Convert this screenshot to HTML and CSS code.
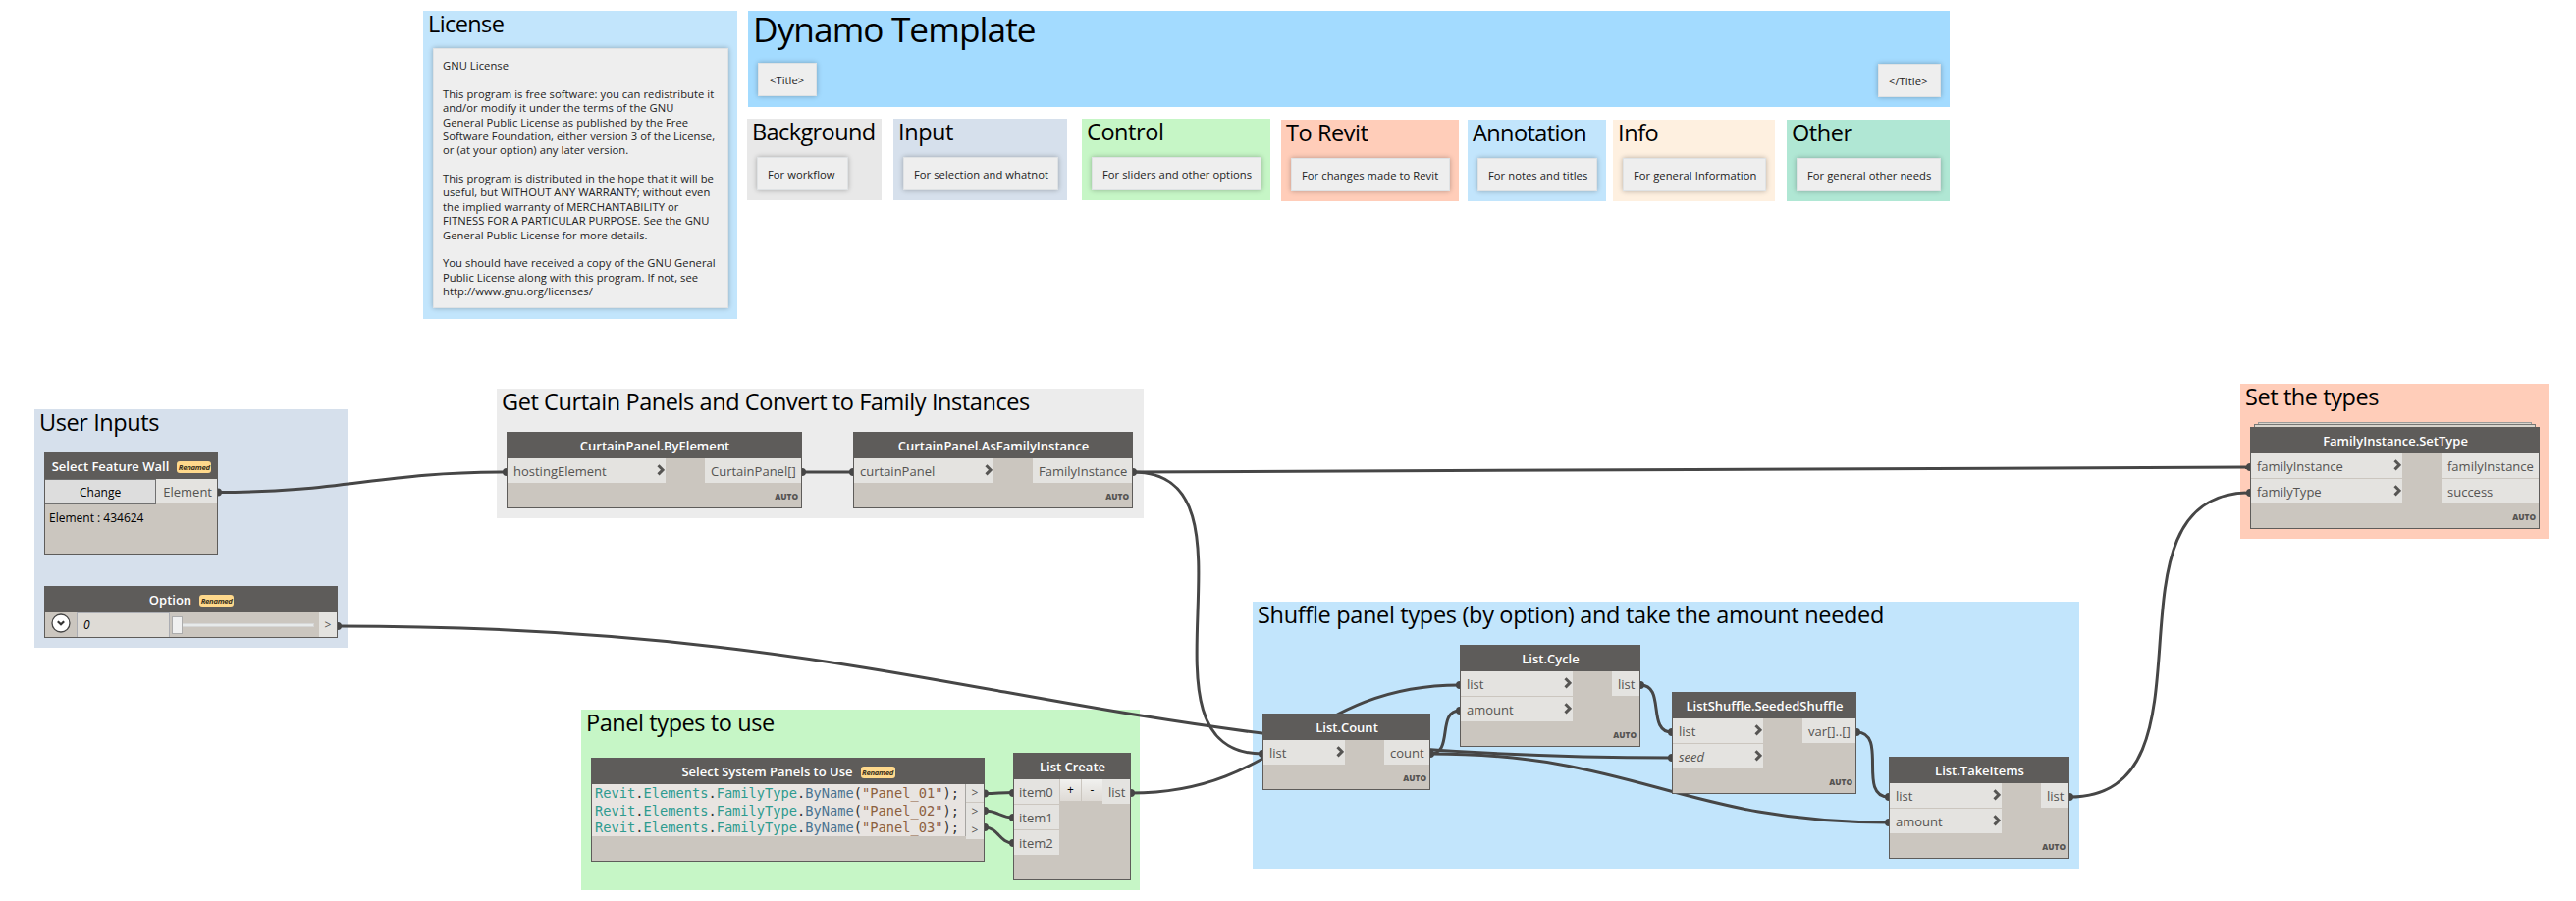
FILE: index.html
```html
<!DOCTYPE html>
<html lang="en">
<head>
<meta charset="utf-8">
<title>Dynamo Template</title>
<link rel="stylesheet" href="styles.css">
</head>
<body>
<main class="canvas">
  <section class="group g-license sky"><h2>License</h2>
    <div class="note note-long">GNU License

This program is free software: you can redistribute it
and/or modify it under the terms of the GNU
General Public License as published by the Free
Software Foundation, either version 3 of the License,
or (at your option) any later version.

This program is distributed in the hope that it will be
useful, but WITHOUT ANY WARRANTY; without even
the implied warranty of MERCHANTABILITY or
FITNESS FOR A PARTICULAR PURPOSE. See the GNU
General Public License for more details.

You should have received a copy of the GNU General
Public License along with this program. If not, see
http://www.gnu.org/licenses/</div></section>
  <section class="group g-banner"><h1>Dynamo Template</h1>
    <div class="banner-row"><div class="note note-start">&lt;Title&gt;</div><div class="note note-end">&lt;/Title&gt;</div></div></section>
  <section class="group g-background"><h2>Background</h2><div class="note">For workflow</div></section>
  <section class="group g-input slate"><h2>Input</h2><div class="note">For selection and whatnot</div></section>
  <section class="group g-control green"><h2>Control</h2><div class="note">For sliders and other options</div></section>
  <section class="group g-revit peach"><h2>To Revit</h2><div class="note">For changes made to Revit</div></section>
  <section class="group g-annotation sky"><h2>Annotation</h2><div class="note">For notes and titles</div></section>
  <section class="group g-info"><h2>Info</h2><div class="note">For general Information</div></section>
  <section class="group g-other"><h2>Other</h2><div class="note">For general other needs</div></section>

  <section class="group g-user slate"><h2>User Inputs</h2></section>
  <section class="group g-panels"><h2>Get Curtain Panels and Convert to Family Instances</h2></section>
  <section class="group g-types green"><h2>Panel types to use</h2></section>
  <section class="group g-shuffle sky"><h2>Shuffle panel types (by option) and take the amount needed</h2></section>
  <section class="group g-set peach"><h2>Set the types</h2></section>

  <svg class="wires" width="2624" height="918" viewBox="0 0 2624 918">
    <g fill="none" stroke="#464646" stroke-width="3">
      <path d="M222 501.500C354 501.500 384 481 516 481"/>
      <path d="M817 481H869"/>
      <path d="M1154 481C1666 481 1780 476 2292 476"/>
      <path d="M1154 481C1296 481 1144 768 1286 768"/>
      <path d="M344 638C958 638 1089 772 1703 772"/>
      <path d="M1152 808C1309 808 1330 698 1487 698"/>
      <path d="M1457 768C1481 768 1463 724 1487 724"/>
      <path d="M1457 768C1669 768 1712 838 1924 838"/>
      <path d="M1671 698C1697 698 1677 746 1703 746"/>
      <path d="M1891 746C1924 746 1891 812 1924 812"/>
      <path d="M2108 812C2270 812 2130 502 2292 502"/>
      <path d="M1003 808.500C1016 808.500 1019 807.500 1032 807.500"/>
      <path d="M1003 826C1017 826 1018 833 1032 833"/>
      <path d="M1003 843C1017 843 1018 859 1032 859"/>
    </g>
    <g fill="#464646">
      <circle cx="222" cy="501.500" r="4"/><circle cx="516" cy="481" r="4"/><circle cx="817" cy="481" r="4"/><circle cx="869" cy="481" r="4"/>
      <circle cx="1154" cy="481" r="4"/><circle cx="2292" cy="476" r="4"/><circle cx="2292" cy="502" r="4"/><circle cx="1286" cy="768" r="4"/>
      <circle cx="344" cy="638" r="4"/><circle cx="1703" cy="772" r="4"/><circle cx="1152" cy="808" r="4"/><circle cx="1487" cy="698" r="4"/>
      <circle cx="1457" cy="768" r="4"/><circle cx="1487" cy="724" r="4"/><circle cx="1924" cy="838" r="4"/><circle cx="1671" cy="698" r="4"/>
      <circle cx="1703" cy="746" r="4"/><circle cx="1891" cy="746" r="4"/><circle cx="1924" cy="812" r="4"/><circle cx="2108" cy="812" r="4"/>
      <circle cx="1003" cy="808.500" r="4"/><circle cx="1003" cy="826" r="4"/><circle cx="1003" cy="843" r="4"/>
      <circle cx="1032" cy="808" r="4"/><circle cx="1032" cy="833" r="4"/><circle cx="1032" cy="859" r="4"/>
    </g>
    <symbol id="chev" viewBox="0 0 8 12"><path d="M1.500 1.200 6 5.800 1.500 10.400" fill="none" stroke="#565553" stroke-width="3"/></symbol>
  </svg>

  <article class="node n-wall"><header>Select Feature Wall<span class="tag">Renamed</span></header>
    <div class="wall-row"><div class="change">Change</div><div class="port">Element</div></div>
    <p class="selection">Element : 434624</p></article>

  <article class="node n-option"><header>Option<span class="tag">Renamed</span></header>
    <div class="option-row">
      <svg class="expander" width="20" height="20" viewBox="0 0 20 20"><circle cx="10" cy="10" r="9" fill="#fff" stroke="#444" stroke-width="1.300"/><path d="M6.800 8.200 10 11.300 13.200 8.200" fill="none" stroke="#333" stroke-width="2.200"/></svg>
      <div class="value">0</div>
      <div class="slider"><div class="thumb"></div><div class="track"></div></div>
      <div class="port port-mini">&gt;</div>
    </div></article>

  <article class="node n-byelement"><header>CurtainPanel.ByElement</header>
    <div class="ports"><div class="ins"><div class="port">hostingElement<svg><use href="#chev"/></svg></div></div>
    <div class="outs"><div class="port">CurtainPanel[]</div></div></div><footer>AUTO</footer></article>

  <article class="node n-asfamily"><header>CurtainPanel.AsFamilyInstance</header>
    <div class="ports"><div class="ins"><div class="port">curtainPanel<svg><use href="#chev"/></svg></div></div>
    <div class="outs"><div class="port">FamilyInstance</div></div></div><footer>AUTO</footer></article>

  <article class="node n-code"><header>Select System Panels to Use<span class="tag">Renamed</span></header>
    <div class="code-row">
      <pre class="code"><i>Revit</i>.<i>Elements</i>.<i>FamilyType</i>.<b>ByName</b>(<s>"Panel_01"</s>);
<i>Revit</i>.<i>Elements</i>.<i>FamilyType</i>.<b>ByName</b>(<s>"Panel_02"</s>);
<i>Revit</i>.<i>Elements</i>.<i>FamilyType</i>.<b>ByName</b>(<s>"Panel_03"</s>);</pre>
      <div class="code-ports"><div>&gt;</div><div>&gt;</div><div>&gt;</div></div>
    </div></article>

  <article class="node n-create"><header>List Create</header>
    <div class="ports"><div class="ins"><div class="port">item0</div><div class="port">item1</div><div class="port">item2</div></div>
    <div class="buttons"><span>+</span><span>-</span></div>
    <div class="outs"><div class="port">list</div></div></div></article>

  <article class="node n-count"><header>List.Count</header>
    <div class="ports"><div class="ins"><div class="port">list<svg><use href="#chev"/></svg></div></div>
    <div class="outs"><div class="port">count</div></div></div><footer>AUTO</footer></article>

  <article class="node n-cycle"><header>List.Cycle</header>
    <div class="ports"><div class="ins"><div class="port">list<svg><use href="#chev"/></svg></div><div class="port">amount<svg><use href="#chev"/></svg></div></div>
    <div class="outs"><div class="port">list</div></div></div><footer>AUTO</footer></article>

  <article class="node n-seeded"><header>ListShuffle.SeededShuffle</header>
    <div class="ports"><div class="ins"><div class="port">list<svg><use href="#chev"/></svg></div><div class="port optional">seed<svg><use href="#chev"/></svg></div></div>
    <div class="outs"><div class="port">var[]..[]</div></div></div><footer>AUTO</footer></article>

  <article class="node n-take"><header>List.TakeItems</header>
    <div class="ports"><div class="ins"><div class="port">list<svg><use href="#chev"/></svg></div><div class="port">amount<svg><use href="#chev"/></svg></div></div>
    <div class="outs"><div class="port">list</div></div></div><footer>AUTO</footer></article>

  <div class="stack stack-back"></div><div class="stack stack-front"></div>
  <article class="node n-settype"><header>FamilyInstance.SetType</header>
    <div class="ports"><div class="ins"><div class="port">familyInstance<svg><use href="#chev"/></svg></div><div class="port">familyType<svg><use href="#chev"/></svg></div></div>
    <div class="outs"><div class="port">familyInstance</div><div class="port">success</div></div></div><footer>AUTO</footer></article>
</main>
</body>
</html>
```
FILE: styles.css
```css
* { box-sizing: border-box; }
body { margin: 0; background: #fff; font-family: "Open Sans", sans-serif; }
.canvas { position: relative; width: 2624px; height: 918px; overflow: hidden; }

/* groups */
.group { position: absolute; padding: 0 9px 10px 10px; }
.group h1, .group h2 { margin: 0; font-weight: 400; color: #000; white-space: nowrap; }
.group h2 { height: 28px; font-size: 23.5px; line-height: 26px; letter-spacing: -0.42px; margin-left: -5px; }
.group h1 { height: 38px; font-size: 35.2px; line-height: 36px; letter-spacing: -0.9px; margin-left: -5px; }
.sky { background: #c2e5fc; }
.slate { background: #d6e0ec; }
.green { background: #c6f6c6; }
.peach { background: #ffcdb9; }
.g-license { left: 431px; top: 11px; width: 320px; height: 314px; }
.g-banner { left: 762px; top: 11px; width: 1224px; height: 98px; background: #a3dbff; }
.g-background { left: 761px; top: 121px; width: 137px; height: 83px; background: #e8e8e8; }
.g-input { left: 910px; top: 121px; width: 177px; height: 83px; }
.g-control { left: 1102px; top: 121px; width: 192px; height: 83px; }
.g-revit { left: 1305px; top: 122px; width: 181px; height: 83px; }
.g-annotation { left: 1495px; top: 122px; width: 141px; height: 83px; }
.g-info { left: 1643px; top: 122px; width: 165px; height: 83px; background: #fef0e0; }
.g-other { left: 1820px; top: 122px; width: 166px; height: 83px; background: #b0e7d4; }
.g-user { left: 35px; top: 417px; width: 319px; height: 243px; }
.g-panels { left: 506px; top: 396px; width: 659px; height: 132px; background: #ececec; }
.g-types { left: 592px; top: 723px; width: 569px; height: 184px; }
.g-shuffle { left: 1276px; top: 613px; width: 842px; height: 272px; }
.g-shuffle h2 { letter-spacing: -0.32px; }
.g-background h2, .g-annotation h2, .g-license h2 { letter-spacing: -0.6px; }
.g-set { left: 2282px; top: 391px; width: 315px; height: 158px; }

/* notes */
.note {
  height: 34px; margin-top: 11px; padding: 0 9px 0 10px; border: 1px solid #dfe2e4;
  background: #eee; color: #222; font-size: 11.2px; line-height: 33px; letter-spacing: 0.06px; white-space: nowrap;
  box-shadow: 0 0 5px rgba(0, 0, 0, .28);
}
.note-long { width: 301px; height: 265px; margin: 10px 0 0; padding: 10px 9px 8px; line-height: 14.375px; white-space: pre; }
.g-background .note { width: 93px; }
.banner-row { display: flex; justify-content: space-between; margin-top: 15px; }
.banner-row .note { margin: 0; }
.banner-row .note-start { width: 60px; padding-left: 11px; }
.banner-row .note-end { position: relative; top: 1px; width: 64px; }

.wires { position: absolute; left: 0; top: 0; }

/* nodes */
.node { position: absolute; border: 1px solid #5e5c5a; background: #cbc6bf; color: #555452; font-size: 13px; }
.node header {
  display: flex; align-items: center; justify-content: center; height: 26px; padding: 0 0 0 1px;
  background: #5e5c5a; color: #fff; font-weight: 600; white-space: nowrap;
}
.node footer { position: absolute; right: 3px; bottom: 5px; font-size: 8.3px; font-weight: 800; line-height: 12px; }
.tag {
  width: 35px; height: 12px; margin: 2px 0 0 8px; border-radius: 3px; background: #ffd98c; color: #3b3220;
  font-size: 7.7px; font-style: italic; font-weight: 700; line-height: 12px; letter-spacing: -0.3px; text-align: center;
}
.ports { display: flex; justify-content: space-between; }
.ins, .outs { display: flex; flex-direction: column; gap: 1px; }
.port { display: flex; align-items: center; justify-content: space-between; height: 25px; padding: 1px 5px 0 6px; background: #e4e3e0; white-space: nowrap; }
.ins .port { padding-right: 0; }
.port svg { width: 8px; height: 12px; margin: -3px 1px 0 0; }
.optional { font-style: italic; }

.n-byelement { left: 516px; top: 440px; width: 301px; height: 78px; }
.n-byelement .ins { width: 161px; } .n-byelement .outs { width: 98px; }
.n-asfamily { left: 869px; top: 440px; width: 285px; height: 78px; }
.n-asfamily .ins { width: 142px; } .n-asfamily .outs { width: 101px; }
.n-count { left: 1286px; top: 727px; width: 171px; height: 78px; }
.n-count .ins { width: 83px; } .n-count .outs { width: 46px; }
.n-cycle { left: 1487px; top: 657px; width: 184px; height: 104px; }
.n-cycle .ins { width: 114px; } .n-cycle .outs { width: 28px; }
.n-seeded { left: 1703px; top: 705px; width: 188px; height: 104px; }
.n-seeded .ins { width: 92px; } .n-seeded .outs { width: 54px; }
.n-take { left: 1924px; top: 771px; width: 184px; height: 104px; }
.n-take .ins { width: 114px; } .n-take .outs { width: 28px; }
.n-settype { left: 2292px; top: 435px; width: 295px; height: 104px; }
.n-settype .ins { width: 154px; } .n-settype .outs { width: 99px; }
.stack { position: absolute; background: #d9d5cd; border: 1px solid #9a9a98; }
.stack-back { left: 2300px; top: 430px; width: 279px; height: 6px; }
.stack-front { left: 2296px; top: 432px; width: 287px; height: 6px; border-color: #777673; }

.n-wall { left: 45px; top: 461px; width: 177px; height: 104px; }
.wall-row { display: flex; }
.change {
  width: 114px; height: 26px; border: solid #707070; border-width: 1px 1px 1px 0; background: #ddd; color: #000;
  font-size: 12px; line-height: 26px; text-align: center;
}
.wall-row .port { flex: 1; padding-left: 7px; }
.selection { margin: 5px 0 0 4px; color: #000; font-size: 12px; line-height: 17px; }

.n-option { left: 45px; top: 597px; width: 299px; height: 53px; }
.option-row { display: flex; height: 25px; }
.expander { margin: 1px 6px 0; }
.value {
  width: 95px; padding-left: 6px; border: 1px solid #abadb3; border-bottom: 0; background: #dedbd6; color: #000;
  font-size: 12px; font-style: italic; line-height: 24px;
}
.slider { display: flex; width: 152px; padding-left: 2px; }
.thumb { width: 11px; height: 18px; margin-top: 4px; border: 1px solid #acacac; background: #f0f0f0; }
.track { width: 134px; height: 4px; margin-top: 11px; background: #e7eaea; border: 1px solid #d6d6d6; border-left: 0; }
.port-mini { flex: 1; padding: 0; justify-content: center; font-size: 12px; }

.n-code { left: 602px; top: 772px; width: 401px; height: 106px; }
.code-row { display: flex; height: 53px; }
.code {
  width: 381px; margin: 0; padding: 1px 0 0 3px; border-right: 1px solid #a7a5a2; background: #e8e4e1; color: #333;
  font: 13.7px/17.7px "DejaVu Sans Mono", monospace;
}
.code i { color: #2e9b8f; font-style: normal; }
.code b { color: #4a7391; font-weight: 400; }
.code s { color: #8c6040; text-decoration: none; }
.code-ports { display: flex; flex-direction: column; gap: 1px; width: 18px; height: 52px; font-size: 12px; line-height: 18px; text-align: center; }
.code-ports div { flex: 1; background: #e4e3e0; }

.n-create { left: 1032px; top: 767px; width: 120px; height: 130px; }
.n-create .ins { width: 46px; } .n-create .outs { width: 28px; }
.n-create .ins .port { padding-left: 5px; }
.buttons { display: flex; gap: 1px; margin-left: 1px; flex: 1; }
.buttons span {
  width: 21px; height: 22px; background: linear-gradient(#f1f1ef, #dedad5); color: #000;
  font-size: 12px; line-height: 22px; text-align: center;
}
```
